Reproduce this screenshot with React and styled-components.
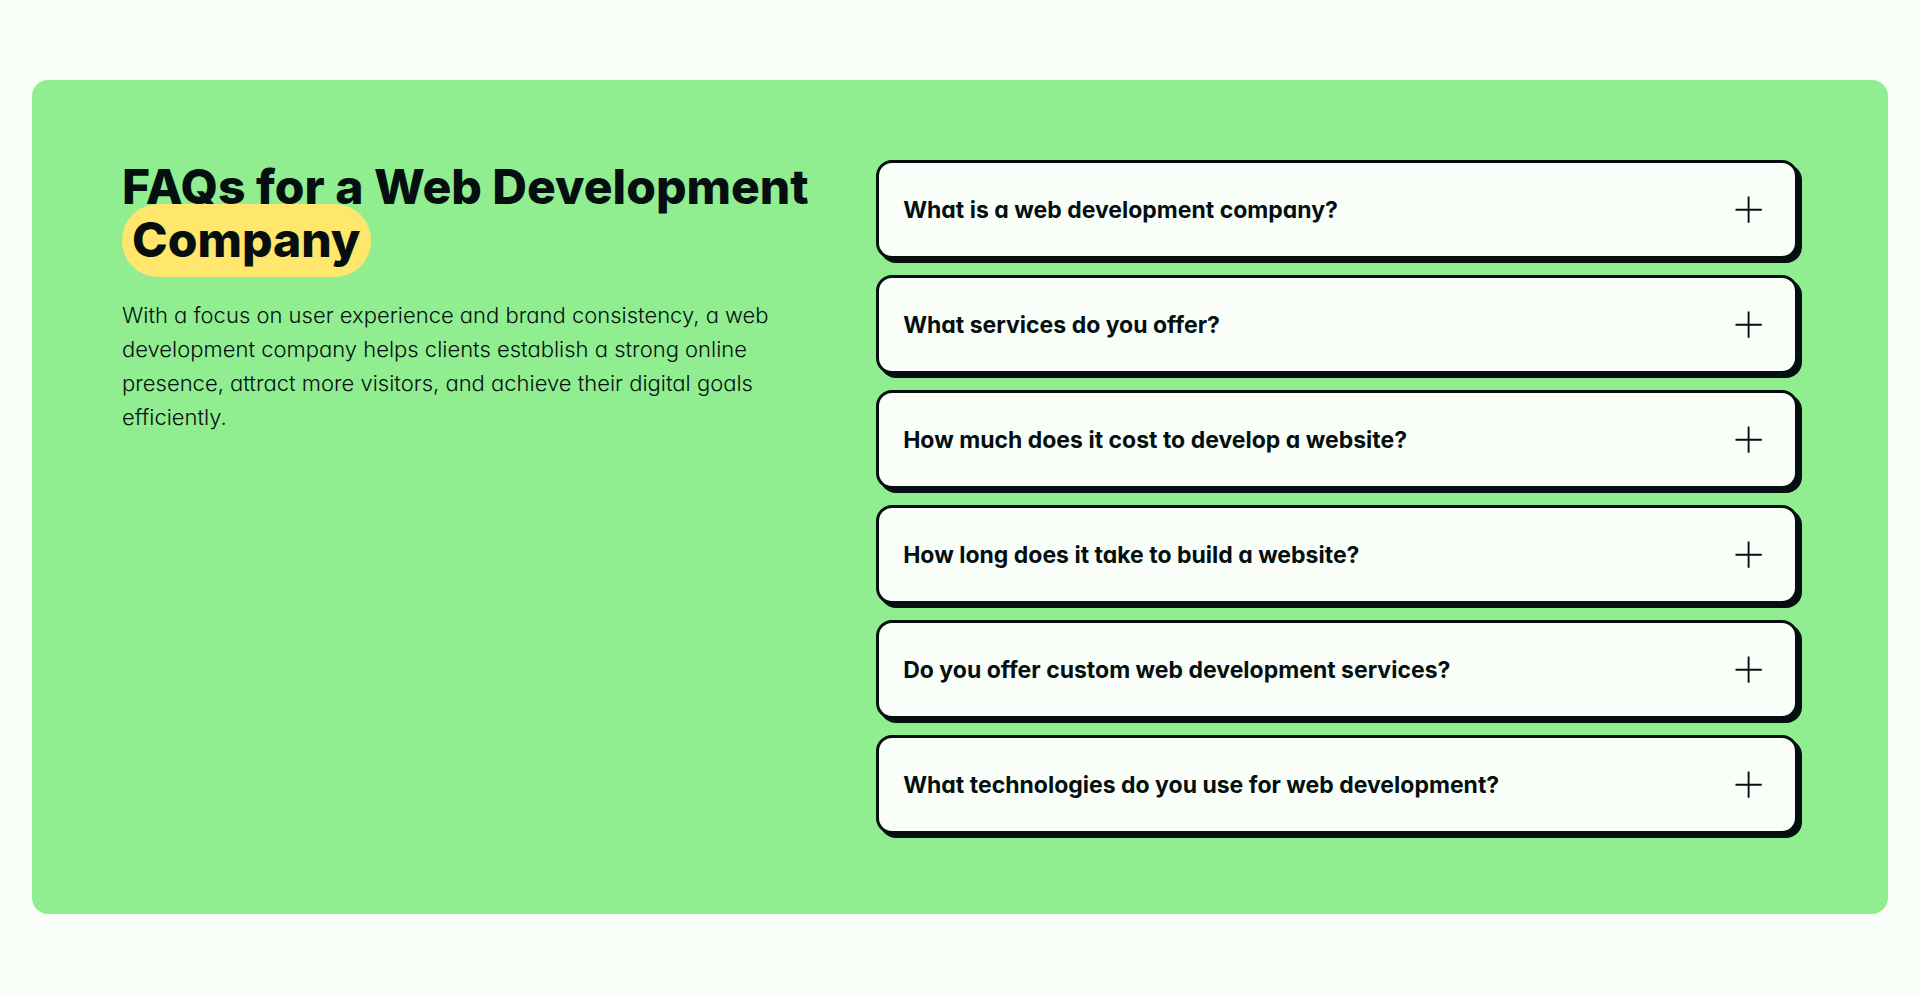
import React, { useState } from 'react';
import styled, { createGlobalStyle } from 'styled-components';

const INK = '#050f10';
const PAPER = '#f9fff8';

const GlobalStyle = createGlobalStyle`
  * {
    box-sizing: border-box;
  }

  body {
    margin: 0;
    background: ${PAPER};
    color: ${INK};
    font-family: Inter, 'Liberation Sans', sans-serif;
    font-feature-settings: 'cv11' 1;
  }
`;

const Page = styled.main`
  padding: 80px 32px;
`;

const Panel = styled.section`
  display: grid;
  grid-template-columns: 9fr 11fr;
  align-items: start;
  padding: 80px 90px;
  border-radius: 16px;
  background: #90ee90;

  @media (max-width: 1100px) {
    grid-template-columns: 1fr;
    gap: 48px;
    padding: 48px 24px;
  }
`;

const Intro = styled.div`
  display: flex;
  flex-direction: column;
  gap: 32px;
  padding-right: 48px;
`;

const Title = styled.h2`
  margin: 0;
  font-size: 48px;
  font-weight: 800;
  line-height: 53px;
  font-feature-settings: normal;
`;

const Highlight = styled.span`
  padding: 6px 10px 8px;
  border-radius: 36px;
  background: #ffe66d;
`;

const Lead = styled.p`
  max-width: 660px;
  margin: 0;
  font-size: 22px;
  font-weight: 300;
  line-height: 34px;
`;

const FaqList = styled.ul`
  display: flex;
  flex-direction: column;
  gap: 16px;
  min-width: 0;
  margin: 0;
  padding: 0;
  list-style: none;
`;

const FaqCard = styled.li`
  border: 3px solid ${INK};
  border-radius: 16px;
  background: ${PAPER};
  box-shadow: 4px 4px 0 ${INK};
`;

const Question = styled.h3`
  margin: 0;
`;

const Toggle = styled.button`
  display: flex;
  align-items: center;
  justify-content: space-between;
  gap: 16px;
  width: 100%;
  padding: 24px;
  border: 0;
  border-radius: 12px;
  background: transparent;
  color: inherit;
  font: inherit;
  font-size: 23px;
  font-weight: 700;
  line-height: 28px;
  font-feature-settings: inherit;
  text-align: left;
  cursor: pointer;
`;

const Icon = styled.svg`
  flex: none;
  width: 44px;
  height: 45px;
  fill: none;
  stroke: currentColor;
  stroke-width: 1.9;
`;

const Answer = styled.p`
  margin: 0;
  padding: 0 24px 24px;
  font-size: 22px;
  font-weight: 300;
  line-height: 34px;
`;

const FAQS = [
  {
    question: 'What is a web development company?',
    answer: 'A team that designs, builds and maintains websites and web applications.',
  },
  {
    question: 'What services do you offer?',
    answer: 'Design, development, hosting support and ongoing maintenance.',
  },
  {
    question: 'How much does it cost to develop a website?',
    answer: 'The cost depends on the size and the features of the project.',
  },
  {
    question: 'How long does it take to build a website?',
    answer: 'Most websites are ready within a few weeks.',
  },
  {
    question: 'Do you offer custom web development services?',
    answer: 'Yes, every project is tailored to the needs of the client.',
  },
  {
    question: 'What technologies do you use for web development?',
    answer: 'We choose modern, well supported tools that suit each project.',
  },
];

function FaqItem({ id, question, answer, open, onToggle }) {
  return (
    <FaqCard>
      <Question>
        <Toggle type="button" aria-expanded={open} aria-controls={id} onClick={onToggle}>
          {question}
          <Icon viewBox="0 0 44 45" aria-hidden="true">
            <path d={open ? 'M8.5 22.8H34.8' : 'M8.5 22.8H34.8M21.6 9.6V35.8'} />
          </Icon>
        </Toggle>
      </Question>
      {open && <Answer id={id}>{answer}</Answer>}
    </FaqCard>
  );
}

export default function App() {
  const [openIndex, setOpenIndex] = useState(-1);

  return (
    <>
      <GlobalStyle />
      <Page>
        <Panel>
          <Intro>
            <Title>
              FAQs for a Web Development <Highlight>Company</Highlight>
            </Title>
            <Lead>
              With a focus on user experience and brand consistency, a web development company helps
              clients establish a strong online presence, attract more visitors, and achieve their
              digital goals efficiently.
            </Lead>
          </Intro>
          <FaqList>
            {FAQS.map((faq, index) => (
              <FaqItem
                key={faq.question}
                id={`answer-${index}`}
                question={faq.question}
                answer={faq.answer}
                open={openIndex === index}
                onToggle={() => setOpenIndex(openIndex === index ? -1 : index)}
              />
            ))}
          </FaqList>
        </Panel>
      </Page>
    </>
  );
}
